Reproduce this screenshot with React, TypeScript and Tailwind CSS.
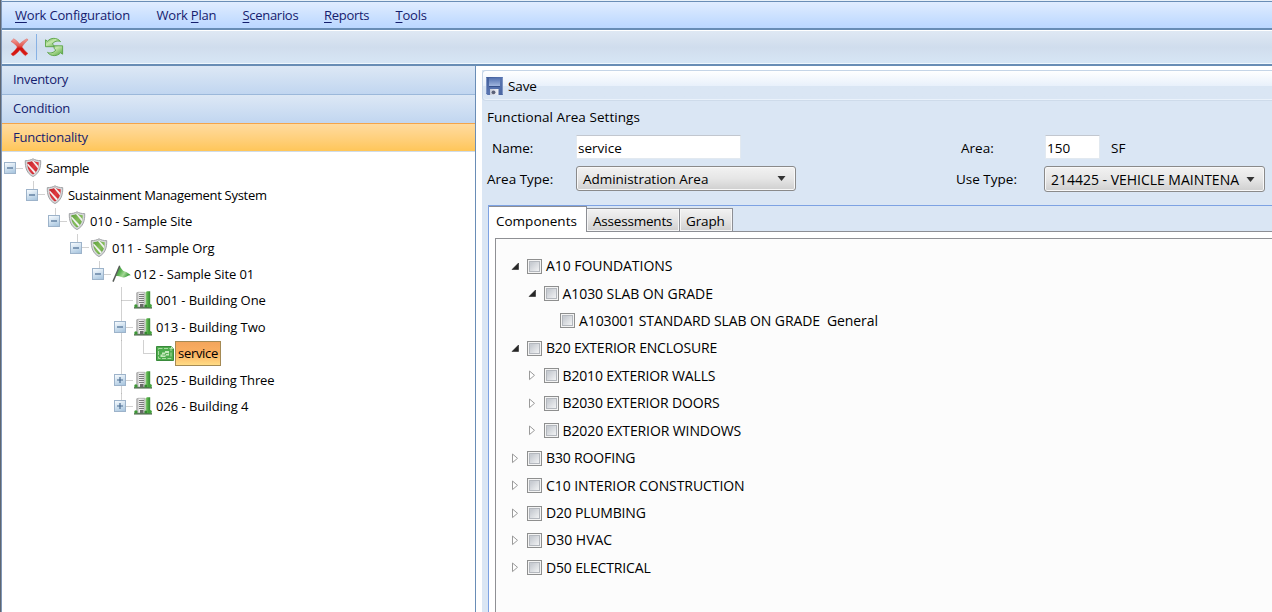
import React from "react";

type ShieldTone = "red" | "green";

function Shield({ tone }: { tone: ShieldTone }) {
  const dark = tone === "red" ? "#a8141c" : "#4c8f30";
  const light = tone === "red" ? "#e03a40" : "#84bd5a";
  const id = "shield-" + tone;
  return (
    <svg width="18" height="20" viewBox="0 0 18 20">
      <defs>
        <linearGradient id={id} x1="0" y1="0" x2="1" y2="1">
          <stop offset="0" stopColor={dark} />
          <stop offset="0.5" stopColor={light} />
          <stop offset="1" stopColor={dark} />
        </linearGradient>
        <clipPath id={id + "-clip"}>
          <path d="M3.300 4.200C5.800 4.200 7.500 3.500 9 2.600c1.500.9 3.200 1.600 5.700 1.600C14.800 9.900 13.200 14 9 16.400 4.800 14 3.200 9.900 3.300 4.200z" />
        </clipPath>
      </defs>
      <path d="M1.300 2.600C4.500 2.800 7 1.800 9 .8c2 1 4.500 2 7.700 1.800C17 9.500 15.200 15.500 9 18.600 2.800 15.500 1 9.500 1.300 2.600z" fill="#d6d8da" stroke="#999b9e" strokeWidth="0.900" />
      <g clipPath={"url(#" + id + "-clip)"}>
        <rect width="18" height="20" fill={"url(#" + id + ")"} />
        <path d="M2.500 6.200L4 5.800 12.300 14.600 11 16.200z" fill="#f3f3f3" />
        <path d="M7.400 2.500L9.200 2.200 15.500 9.400 14.500 11.200z" fill="#efefef" />
      </g>
    </svg>
  );
}

function Flag() {
  return (
    <svg width="19" height="18" viewBox="0 0 19 18">
      <defs>
        <linearGradient id="flag" x1="0" y1="0" x2="1" y2="0.500">
          <stop offset="0" stopColor="#2f8a35" />
          <stop offset="0.450" stopColor="#5fb455" />
          <stop offset="0.700" stopColor="#a5d896" />
          <stop offset="1" stopColor="#3c9b3b" />
        </linearGradient>
      </defs>
      <path d="M7.400 1.200C9.300 2.500 10.200 5.800 12.800 6.600c2.200.6 4 2 6 3.700-2.700-.3-4 1.900-6.800 2.200-2.700.2-5-2.300-8.300-1.200z" fill="url(#flag)" />
      <path d="M7.700 .8L1 16.600" stroke="#565b57" strokeWidth="1.500" />
    </svg>
  );
}

function Building() {
  return (
    <svg width="18" height="18" viewBox="0 0 18 18">
      <defs>
        <linearGradient id="tower" x1="0" x2="1">
          <stop offset="0" stopColor="#8fd07c" />
          <stop offset="0.450" stopColor="#55ae48" />
          <stop offset="1" stopColor="#328832" />
        </linearGradient>
        <linearGradient id="facade" x1="0" x2="1">
          <stop offset="0" stopColor="#a9a9a9" />
          <stop offset="0.350" stopColor="#f4f4f4" />
          <stop offset="1" stopColor="#d5d5d5" />
        </linearGradient>
      </defs>
      <path d="M11.500 1.300L13 .3h3.200v16.200h-4.700z" fill="url(#tower)" />
      <path d="M2.700 1.800L4 1.300H10.800V16H2.700z" fill="url(#facade)" stroke="#a0a0a0" strokeWidth="0.700" />
      <path d="M5 3.500h5M5 5.500h5M5 7.500h5M5 9.500h5M5 11.500h5" stroke="#6d6d6d" strokeWidth="0.900" />
      <path d="M6 13h3.500v3H6z" fill="#6a6a6a" />
      <path d="M0 16.200h18v1.300H0z" fill="#3c5a3a" />
      <circle cx="1.900" cy="14.900" r="1.700" fill="#3c9735" />
      <circle cx="11.800" cy="15" r="1.500" fill="#348b2f" />
      <circle cx="16" cy="14.800" r="1.900" fill="#43a03b" />
    </svg>
  );
}

function FloorPlan() {
  return (
    <svg width="18" height="17" viewBox="0 0 18 17">
      <path d="M.5 1.500h14.700l2.300 2.300v11.700H.5z" fill="#4dab4c" stroke="#398a3b" />
      <path d="M2.500 3.500h12.500v10H2.500z" fill="none" stroke="#a8dba0" strokeWidth="1" strokeDasharray="4 1.500" />
      <path d="M4.500 9.500h1.500V7.500h3V6h4v4.500H9.500v1.500h-5z" fill="#c4e8bb" />
      <path d="M6.500 10h3V8.500h3" fill="none" stroke="#58b055" />
      <path d="M15 1.200l2.600 2.600H15z" fill="#c9ebc2" />
    </svg>
  );
}

function DeleteIcon() {
  return (
    <svg width="19" height="19" viewBox="0 0 19 19">
      <defs>
        <linearGradient id="del" x1="0" y1="0" x2="0" y2="1">
          <stop offset="0" stopColor="#f3a39d" />
          <stop offset="0.400" stopColor="#e35a52" />
          <stop offset="0.550" stopColor="#cf1411" />
          <stop offset="1" stopColor="#dc1b16" />
        </linearGradient>
      </defs>
      <path d="M1 3.400L3.700 .8C5.900 1.900 8 3.900 9.700 6 11.500 4.200 14 2.200 16.900 .8l1.200 1C15.700 4 13.500 6.500 12 8.900c1.700 2.300 3.700 4.700 6 6.600l-2.600 2.200C13.200 16.200 11.400 14.200 9.800 12 8 14.300 5.900 16.400 3 18L.9 15.900C3.400 14 5.700 11.600 7.300 9 5.800 6.900 3.700 4.800 1 3.400z" fill="url(#del)" stroke="#d6504a" strokeWidth="0.400" />
    </svg>
  );
}

function RefreshIcon() {
  return (
    <svg width="20" height="20" viewBox="0 0 20 20">
      <defs>
        <linearGradient id="ref" x1="0" y1="0" x2="1" y2="1">
          <stop offset="0" stopColor="#63b04c" />
          <stop offset="0.400" stopColor="#c4e7ab" />
          <stop offset="1" stopColor="#4fa23c" />
        </linearGradient>
      </defs>
      <path d="M1.500 2.800L3.600 4.200C6.500 .7 12.800 0 16.600 4.600 13.800 3.500 10.300 4.100 8.300 7L10 8.500V9.700H1.500z" fill="url(#ref)" stroke="#5aa346" strokeWidth="0.900" />
      <path d="M18.600 17.200L16.500 15.800C13.600 19.300 7.300 20 3.500 15.400 6.300 16.500 9.800 15.900 11.800 13L10.100 11.500V8.800H18.600z" fill="url(#ref)" stroke="#5aa346" strokeWidth="0.900" />
    </svg>
  );
}

function SaveIcon() {
  return (
    <svg width="17" height="18" viewBox="0 0 17 18">
      <defs>
        <linearGradient id="disk" x1="0" y1="0" x2="1" y2="1">
          <stop offset="0" stopColor="#3f5c98" />
          <stop offset="0.500" stopColor="#5874b0" />
          <stop offset="1" stopColor="#4a65a0" />
        </linearGradient>
        <linearGradient id="disklabel" x1="0" y1="0" x2="0" y2="1">
          <stop offset="0" stopColor="#5572b0" />
          <stop offset="1" stopColor="#a1b6df" />
        </linearGradient>
        <linearGradient id="shutter" x1="0" y1="0" x2="1" y2="0">
          <stop offset="0" stopColor="#c7ccd9" />
          <stop offset="1" stopColor="#f2f3f7" />
        </linearGradient>
      </defs>
      <path d="M0 0h17v18H1.500L0 16.500z" fill="url(#disk)" />
      <path d="M3 1h11v8H3z" fill="url(#disklabel)" />
      <path d="M3 9.500h11" stroke="#37518b" />
      <path d="M4 12h8.500v6H4z" fill="url(#shutter)" />
      <circle cx="7.500" cy="15.300" r="1.900" fill="#5b6279" />
      <path d="M.5.500v16M16.500.500v17" stroke="#7d94c3" />
    </svg>
  );
}

type Node = {
  level: number;
  label: string;
  icon: React.ReactNode;
  toggle?: "+" | "-";
  selected?: boolean;
  track: string;
};

const nodes: Node[] = [
  { level: 0, label: "Sample", icon: <Shield tone="red" />, toggle: "-", track: "tracking-[-0.3px]" },
  { level: 1, label: "Sustainment Management System", icon: <Shield tone="red" />, toggle: "-", track: "tracking-[-0.3px]" },
  { level: 2, label: "010 - Sample Site", icon: <Shield tone="green" />, toggle: "-", track: "tracking-[-0.1px]" },
  { level: 3, label: "011 - Sample Org", icon: <Shield tone="green" />, toggle: "-", track: "tracking-[-0.1px]" },
  { level: 4, label: "012 - Sample Site 01", icon: <Flag />, toggle: "-", track: "tracking-[-0.1px]" },
  { level: 5, label: "001 - Building One", icon: <Building />, track: "tracking-[-0.08px]" },
  { level: 5, label: "013 - Building Two", icon: <Building />, toggle: "-", track: "tracking-[-0.08px]" },
  { level: 6, label: "service", icon: <FloorPlan />, selected: true, track: "tracking-[-0.3px]" },
  { level: 5, label: "025 - Building Three", icon: <Building />, toggle: "+", track: "tracking-[-0.12px]" },
  { level: 5, label: "026 - Building 4", icon: <Building />, toggle: "+", track: "tracking-[-0.05px]" },
];

function Toggle({ kind }: { kind: "+" | "-" }) {
  return (
    <svg width="12" height="12" viewBox="0 0 12 12">
      <defs>
        <linearGradient id="tog" x1="0.300" y1="0" x2="0.700" y2="1">
          <stop offset="0" stopColor="#f4f9fd" />
          <stop offset="1" stopColor="#a9c6df" />
        </linearGradient>
      </defs>
      <rect x="0.500" y="0.500" width="11" height="11" fill="url(#tog)" stroke="#9db3ca" />
      <path d={kind === "+" ? "M3 6h6M6 3v6" : "M3 6h6"} stroke="#4a6c92" strokeWidth="1.200" />
    </svg>
  );
}

function Guides({ node, index }: { node: Node; index: number }) {
  const own = node.level > 0 && node.level < 5;
  const trunk = index >= 5 && index <= 8;
  return (
    <svg className="absolute inset-0" width="160" height="27" viewBox="0 0 160 27">
      <g stroke="#a2a2a2" strokeDasharray="1 1" fill="none">
        {own && <path d={`M${11.5 + 22 * node.level} 0.500V13`} />}
        {trunk && <path d="M121.500 0.500V27" />}
        {index === 9 && <path d="M121.500 0.500V13" />}
        {index === 7 && <path d="M143.500 0.500V13" />}
        <path d={`M${11.5 + 22 * node.level} 13.500h12`} />
      </g>
    </svg>
  );
}

const indents = ["pl-[4px]", "pl-[26px]", "pl-[48px]", "pl-[70px]", "pl-[92px]", "pl-[114px]", "pl-[136px]"];

function TreeRow({ node, index }: { node: Node; index: number }) {
  return (
    <div className={"relative -ml-[2px] flex h-[26.45px] items-center " + indents[node.level]}>
      <Guides node={node} index={index} />
      <span className="relative h-3 w-[20px] shrink-0">{node.toggle && <Toggle kind={node.toggle} />}</span>
      <span className="relative flex w-[19px] shrink-0 justify-start">{node.icon}</span>
      {node.selected ? (
        <span className={"relative flex h-[25px] w-[46px] items-center justify-center border border-[#a58a54] bg-linear-to-b from-[#f3a55c] via-[#fbb060] to-[#ffdc85] whitespace-pre " + node.track}>
          {node.label}
        </span>
      ) : (
        <span className={"relative ml-[3px] whitespace-pre " + node.track}>{node.label}</span>
      )}
    </div>
  );
}

type Item = { level: number; label: string; state: "open" | "closed" | "leaf"; track: string };

const items: Item[] = [
  { level: 0, label: "A10 FOUNDATIONS", state: "open", track: "tracking-[-0.05px]" },
  { level: 1, label: "A1030 SLAB ON GRADE", state: "open", track: "tracking-[-0.07px]" },
  { level: 2, label: "A103001 STANDARD SLAB ON GRADE  General", state: "leaf", track: "tracking-[-0.1px]" },
  { level: 0, label: "B20 EXTERIOR ENCLOSURE", state: "open", track: "tracking-[-0.2px]" },
  { level: 1, label: "B2010 EXTERIOR WALLS", state: "closed", track: "tracking-[-0.15px]" },
  { level: 1, label: "B2030 EXTERIOR DOORS", state: "closed", track: "tracking-[-0.15px]" },
  { level: 1, label: "B2020 EXTERIOR WINDOWS", state: "closed", track: "tracking-[-0.1px]" },
  { level: 0, label: "B30 ROOFING", state: "closed", track: "tracking-[-0.15px]" },
  { level: 0, label: "C10 INTERIOR CONSTRUCTION", state: "closed", track: "tracking-[-0.08px]" },
  { level: 0, label: "D20 PLUMBING", state: "closed", track: "tracking-[-0.2px]" },
  { level: 0, label: "D30 HVAC", state: "closed", track: "tracking-[0px]" },
  { level: 0, label: "D50 ELECTRICAL", state: "closed", track: "tracking-[-0.15px]" },
];

const itemIndents = ["pl-[15px]", "pl-[31.5px]", "pl-[48px]"];

function ItemRow({ item }: { item: Item }) {
  return (
    <div className={"flex h-[27.45px] items-center " + itemIndents[item.level]}>
      <span className="w-[16px] shrink-0">
        {item.state === "open" && (
          <svg width="9" height="9" viewBox="0 0 9 9">
            <path d="M7.500 1v6.500H1z" fill="#262626" stroke="#111" strokeWidth="0.500" />
          </svg>
        )}
        {item.state === "closed" && (
          <svg width="9" height="11" viewBox="0 0 9 11">
            <path d="M1.500 1v8.600L6.500 5.300z" fill="#fff" stroke="#9a9a9a" />
          </svg>
        )}
      </span>
      <svg className="shrink-0" width="15" height="15" viewBox="0 0 15 15">
        <defs>
          <linearGradient id="chk" x1="0" y1="0" x2="1" y2="1">
            <stop offset="0.200" stopColor="#c8ccd2" />
            <stop offset="1" stopColor="#f4f5f6" />
          </linearGradient>
        </defs>
        <rect x="0.500" y="0.500" width="14" height="14" fill="#f4f4f4" stroke="#8e8f8f" />
        <rect x="2.500" y="2.500" width="10" height="10" fill="url(#chk)" stroke="#b4b8be" />
      </svg>
      <span className={"ml-[4px] text-[14px] whitespace-pre " + item.track}>{item.label}</span>
    </div>
  );
}

function Combo({ label, size, text }: { label: string; size: string; text: string }) {
  return (
    <div className={"flex items-center rounded-[3px] border border-[#8a8a8a] bg-linear-to-b from-[#f2f2f2] from-0% via-[#e6e6e6] via-50% to-[#cfcfcf] pl-[6px] pr-[9px] shadow-[inset_0_0_0_1px_#f8f8f8] " + size}>
      <span className={"whitespace-pre " + text}>{label}</span>
      <svg className="ml-auto shrink-0" width="9" height="5" viewBox="0 0 9 5">
        <path d="M0.500 0h8L4.500 5z" fill="#333" />
      </svg>
    </div>
  );
}

function MenuItem({ before, hot, after, box }: { before?: string; hot: string; after: string; box: string }) {
  return (
    <span className={"whitespace-pre " + box}>
      {before}
      <span className="underline decoration-1 underline-offset-2">{hot}</span>
      {after}
    </span>
  );
}

export default function App() {
  return (
    <div className="flex h-[612px] w-[1272px] overflow-hidden bg-white font-['Open_Sans','Noto_Sans',sans-serif] text-[13px] leading-[18px] text-black">
      <div className="w-[2px] shrink-0 border-r border-[#7f97b8] bg-[#5f6670]" />
      <div className="flex w-[1270px] flex-col">
        <div className="h-[2px] shrink-0 border-b border-[#6a8db6] bg-[#e8f0f8]" />
        <nav className="flex h-[26px] shrink-0 items-center bg-linear-to-b from-[#e0ecff] to-[#bad7ff] pl-[13px] text-[#15206e]">
          <MenuItem hot="W" after="ork Configuration" box="w-[141.5px] tracking-[-0.18px]" />
          <MenuItem before="Work " hot="P" after="lan" box="w-[86px] tracking-[-0.2px]" />
          <MenuItem hot="S" after="cenarios" box="w-[81.5px] tracking-[-0.3px]" />
          <MenuItem hot="R" after="eports" box="w-[71.5px] tracking-[-0.3px]" />
          <MenuItem hot="T" after="ools" box="tracking-[-0.2px]" />
        </nav>
        <div className="flex h-[38px] shrink-0 items-center border-y-2 border-[#688db5] bg-linear-to-b from-[#e0e9f4] from-0% via-[#d0dded] via-50% to-[#d7e6f5] pl-[8px] shadow-[inset_0_1px_0_#fff,inset_0_-1px_0_#eff7fd]">
          <DeleteIcon />
          <span className="ml-[7px] h-[26px] w-px bg-[#87b1e4]" />
          <span className="ml-[7px]">
            <RefreshIcon />
          </span>
        </div>
        <div className="flex min-h-0 flex-1">
          <aside className="flex w-[474px] shrink-0 flex-col border-r border-[#6a8db6]">
            <div className="flex h-[29px] shrink-0 items-center border-b border-[#9bb8da] bg-linear-to-b from-[#dde8f5] to-[#c1d6f0] pb-[2px] pl-[11px] text-[#15206e]">
              <span className="tracking-[-0.3px]">Inventory</span>
            </div>
            <div className="flex h-[28px] shrink-0 items-center bg-linear-to-b from-[#dde8f5] to-[#c1d6f0] pb-[2px] pl-[11px] text-[#15206e]">
              <span className="tracking-[-0.2px]">Condition</span>
            </div>
            <div className="flex h-[29px] shrink-0 items-center border-t border-b border-t-[#f4a44a] border-b-[#d0dcea] bg-linear-to-b from-[#ffdb9f] to-[#ffc658] pb-[2px] pl-[11px] text-[#15206e]">
              <span className="tracking-[-0.2px]">Functionality</span>
            </div>
            <div className="flex flex-col pt-[3px]">
              {nodes.map((n, i) => (
                <TreeRow key={n.label} node={n} index={i} />
              ))}
            </div>
          </aside>
          <main className="flex min-w-0 flex-1 flex-col pt-[4px] pl-[6px] text-[13.5px]">
            <div className="flex min-h-0 flex-1 flex-col bg-[#dae6f4]">
              <div className="flex h-[31px] shrink-0 items-center rounded-l-[4px] border-y border-l border-t-[#c5d5e7] border-b-[#cedbea] border-l-[#c5d5e7] bg-linear-to-b from-white from-0% via-[#e9f1fb] via-50% to-[#dae6f4] to-51% pl-[3px] shadow-[inset_0_-1px_0_#eaf2fb]">
                <SaveIcon />
                <span className="ml-[5px] tracking-[-0.1px]">Save</span>
              </div>
              <div className="mt-[7px] pl-[5px] tracking-[0.05px]">Functional Area Settings</div>
              <div className="mt-[9px] flex h-[24px] shrink-0 items-center">
                <span className="w-[94px] pt-[2px] pl-[10px]">Name:</span>
                <span className="flex h-[24px] w-[165px] items-center border border-t-[#c2c7cf] border-r-[#e2e9f0] border-b-[#e2e9f0] border-l-[#e2e9f0] bg-white pt-[2px] pl-px">service</span>
                <span className="ml-[220px] w-[84px] pt-[2px]">Area:</span>
                <span className="flex h-[24px] w-[55px] items-center border border-t-[#c2c7cf] border-r-[#e2e9f0] border-b-[#e2e9f0] border-l-[#e2e9f0] bg-white pt-[2px] pl-px">150</span>
                <span className="ml-[11px] pt-[2px]">SF</span>
              </div>
              <div className="mt-[7px] flex h-[26px] shrink-0 items-start">
                <span className="mt-[4px] w-[94px] pl-[5px]">Area Type:</span>
                <Combo label="Administration Area" size="h-[25px] w-[220px]" text="tracking-[-0.03px]" />
                <span className="mt-[4px] ml-[160px] w-[88px]">Use Type:</span>
                <Combo label="214425 - VEHICLE MAINTENA" size="h-[26px] w-[221px] pt-px" text="text-[14px] tracking-[-0.02px]" />
              </div>
              <div className="mt-[13px] ml-[6px] flex min-h-0 flex-1 flex-col border-t border-l border-[#7da2e3]">
                <div className="flex h-[26px] shrink-0 items-end">
                  <div className="flex h-[26px] w-[98px] items-center border-t border-r border-[#8c8e94] bg-white pt-[3px] pl-[7px]">Components</div>
                  <div className="flex h-[24px] flex-1 border-b border-[#8c8e94]">
                    <div className="flex h-[23px] w-[93px] items-center border-t border-r border-[#8c8e94] bg-linear-to-b from-[#f2f2f2] from-0% via-[#e4e4e4] via-50% to-[#cfcfcf] pt-[2px] pl-[6px] tracking-[-0.2px] shadow-[inset_0_0_0_1px_#f6f6f6]">Assessments</div>
                    <div className="flex h-[23px] w-[53px] items-center border-t border-r border-[#8c8e94] bg-linear-to-b from-[#f2f2f2] from-0% via-[#e4e4e4] via-50% to-[#cfcfcf] pt-[2px] pl-[6px] tracking-[-0.15px] shadow-[inset_0_0_0_1px_#f6f6f6]">Graph</div>
                  </div>
                </div>
                <div className="flex min-h-0 flex-1 flex-col bg-white pt-[6px] pl-[6px]">
                  <div className="flex min-h-0 flex-1 flex-col border-t border-l border-[#8f9094] bg-[#fcfcfc] pt-[13.4px]">
                    {items.map((it) => (
                      <ItemRow key={it.label} item={it} />
                    ))}
                  </div>
                </div>
              </div>
            </div>
          </main>
        </div>
      </div>
    </div>
  );
}
